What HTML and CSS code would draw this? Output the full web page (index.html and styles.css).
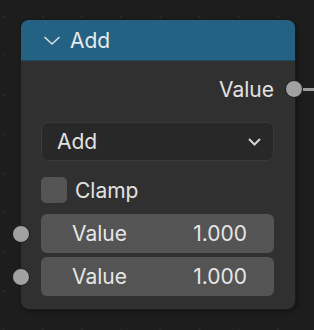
FILE: index.html
```html
<!DOCTYPE html>
<html lang="en">
<head>
    <meta charset="UTF-8">
    <title>Add node</title>
    <link rel="stylesheet" href="styles.css">
</head>
<body>
    <div class="node">
        <div class="node-header">
            <svg class="collapse" width="18" height="11" viewBox="0 0 18 11">
                <polyline points="1.5,2 9,9 16.5,2" fill="none" stroke="#d8dde0" stroke-width="1.6"/>
            </svg>
            <span>Add</span>
        </div>
        <div class="node-body">
            <div class="row output">
                <span>Value</span>
                <div class="socket out"></div>
                <div class="link"></div>
            </div>
            <div class="dropdown">
                <span>Add</span>
                <svg width="13" height="8" viewBox="0 0 13 8">
                    <polyline points="1,1 6.5,6.5 12,1" fill="none" stroke="#d4d4d4" stroke-width="2"/>
                </svg>
            </div>
            <div class="checkbox-row">
                <div class="checkbox"></div>
                <span>Clamp</span>
            </div>
            <div class="fields">
                <div class="field">
                    <div class="socket in"></div>
                    <span>Value</span>
                    <span>1.000</span>
                </div>
                <div class="field">
                    <div class="socket in"></div>
                    <span>Value</span>
                    <span>1.000</span>
                </div>
            </div>
        </div>
    </div>
</body>
</html>
```

FILE: styles.css
```css
body {
    margin: 0;
    width: 314px;
    height: 330px;
    overflow: hidden;
    font-family: Inter, "DejaVu Sans", sans-serif;
    background-color: #1d1d1d;
    background-image: radial-gradient(circle, #2b2b2b 0.9px, transparent 1.3px);
    background-size: 39.2px 39.2px;
    background-position: -16px -3px;
}

.node {
    margin: 20px 0 0 21px;
    width: 274px;
    background: #303030;
    border-radius: 8px;
    box-shadow: 0 0 0 1px #1a1a1a, 2px 2px 5px rgba(0, 0, 0, 0.45);
}

.node-header {
    height: 40px;
    background: #246284;
    border-radius: 8px 8px 0 0;
    display: flex;
    align-items: center;
    padding-left: 22px;
    color: #e8eaec;
    font-size: 21px;
    box-shadow: 0 1px 0 #1e4a62;
}

.collapse {
    margin-right: 9px;
    margin-top: 1px;
}

.node-body {
    padding: 9px 21px 13px 20px;
    color: #e2e2e2;
    font-size: 21px;
}

.row {
    position: relative;
    height: 40px;
    display: flex;
    align-items: center;
}

.output {
    justify-content: flex-end;
}

.socket {
    position: absolute;
    width: 16px;
    height: 16px;
    border-radius: 50%;
    background: #a1a1a1;
    border: 1px solid #1b1b1b;
    box-sizing: content-box;
}

.socket.out {
    right: -29px;
    top: 11px;
}

.link {
    position: absolute;
    right: -40px;
    top: 18.5px;
    width: 11px;
    height: 3px;
    background: #9b9b9b;
}

.dropdown {
    margin-top: 13px;
    height: 37px;
    background: #282828;
    border: 1px solid #3a3a3a;
    border-radius: 7px;
    display: flex;
    align-items: center;
    justify-content: space-between;
    padding: 0 12px 0 15px;
}

.checkbox-row {
    margin-top: 16px;
    height: 26px;
    display: flex;
    align-items: center;
    gap: 8px;
}

.checkbox {
    width: 26px;
    height: 26px;
    border-radius: 5px;
    background: #545454;
}

.fields {
    margin-top: 11px;
    display: flex;
    flex-direction: column;
    gap: 4px;
}

.field {
    position: relative;
    height: 39px;
    background: #545454;
    border-radius: 6px;
    display: flex;
    align-items: center;
    justify-content: space-between;
    padding: 0 27px 0 31px;
    color: #e6e6e6;
}

.socket.in {
    left: -29px;
    top: 10.5px;
}
```
